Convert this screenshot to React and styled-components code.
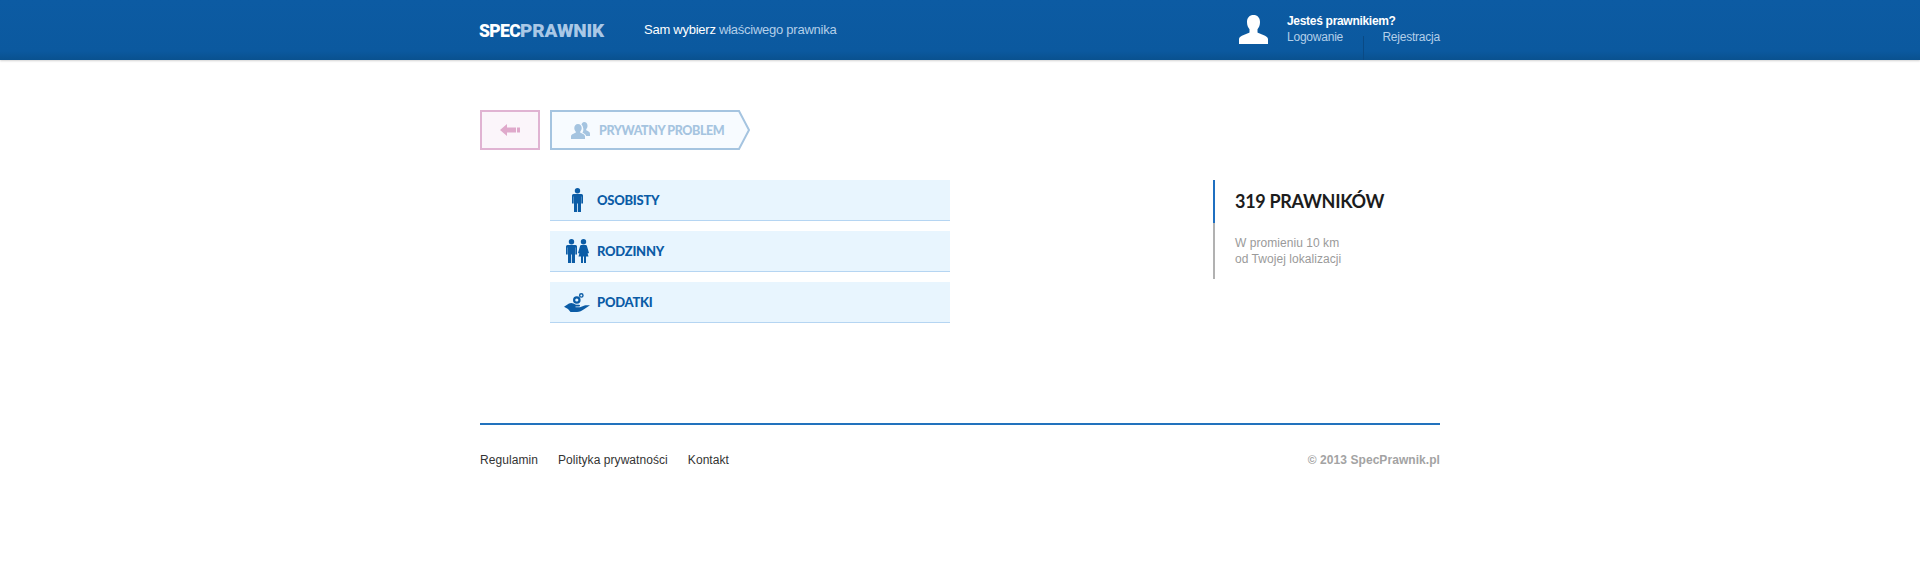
import React from "react";
import styled, { createGlobalStyle } from "styled-components";

const Global = createGlobalStyle`
  html, body { margin: 0; padding: 0; background: #fff; }
  body { font-family: "Liberation Sans", Arial, sans-serif; }
  * { box-sizing: border-box; }
`;
const Header = styled.header`
  height: 60px;
  background: linear-gradient(#0c5ba3, #0b599f 85%, #09518f);
  box-shadow: 0 1px 2px rgba(0,0,0,.18);
`;
const Wrap = styled.div`
  width: 960px;
  margin: 0 auto;
`;
const HeaderInner = styled(Wrap)`
  height: 60px;
  display: flex;
  align-items: center;
  position: relative;
`;
const Logo = styled.div`
  font-family: "Roboto", sans-serif;
  font-weight: 900;
  font-size: 17.5px;
  letter-spacing: -0.65px;
  width: 165px;
  margin-left: -1px;
  color: #fff;
  span { color: #a9c8e6; font-size: 19px; letter-spacing: -0.15px; }
`;
const Slogan = styled.div`
  font-size: 13px;
  color: #fff;
  letter-spacing: -0.25px;
  margin-top: -1px;
  span { color: #b3cfe9; }
`;
const Account = styled.div`
  margin-left: auto;
  display: flex;
  width: 201px;
  align-items: center;
  position: relative;
  height: 60px;
`;
const UserIcon = styled.svg`
  width: 29px;
  height: 29px;
  margin: 0 19px 0 0;
  flex: none;
  position: relative;
  top: -1px;
`;
const AccountText = styled.div`
  flex: 1;
  font-size: 12px;
  line-height: 16px;
  margin-top: -2px;
`;
const Question = styled.div`
  color: #fff;
  font-weight: 700;
  letter-spacing: -0.3px;
`;
const Links = styled.div`
  display: flex;
  justify-content: space-between;
  color: #b3cfe9;
  letter-spacing: -0.22px;
`;
const Divider = styled.i`
  position: absolute;
  left: 124px;
  top: 36px;
  height: 24px;
  width: 1px;
  background: #0a4a85;
`;
const Crumbs = styled.div`
  display: flex;
  gap: 10px;
  padding-top: 50px;
`;
const Back = styled.div`
  width: 60px;
  height: 40px;
  border: 2px solid #e0b3d2;
  background: #fbf5fa;
  display: flex;
  align-items: center;
  justify-content: center;
`;
const Tag = styled.div`
  position: relative;
  width: 201px;
  height: 40px;
  display: flex;
  align-items: center;
  padding-left: 21px;
  gap: 9px;
  color: #a5c4e0;
  font-family: "Lato", sans-serif;
  font-weight: 900;
  font-size: 12.5px;
  letter-spacing: -0.42px;
`;
const TagShape = styled.svg`
  position: absolute;
  left: 0;
  top: 0;
`;
const TagIcon = styled.svg`
  position: relative;
  flex: none;
`;
const TagLabel = styled.span`
  position: relative;
`;
const Main = styled.div`
  display: flex;
  padding: 30px 0 0 70px;
  height: 273px;
  justify-content: space-between;
`;
const List = styled.div`
  width: 400px;
  display: flex;
  flex-direction: column;
  gap: 10px;
`;
const Row = styled.div`
  height: 41px;
  background: #e8f5fe;
  border-bottom: 1px solid #b5d5f2;
  display: flex;
  align-items: center;
  color: #0b5ca6;
  font-family: "Lato", sans-serif;
  font-weight: 900;
  font-size: 13px;
  letter-spacing: -0.25px;
`;
const RowIcon = styled.div`
  width: 47px;
  padding-left: 7px;
  display: flex;
  justify-content: center;
  flex: none;
`;
const Side = styled.aside`
  width: 227px;
  height: 99px;
  border-left: 2px solid #b1b1b1;
  position: relative;
  padding-left: 20px;
`;
const SideMark = styled.i`
  position: absolute;
  left: -2px;
  top: 0;
  width: 2px;
  height: 43px;
  background: #1f6fc0;
`;
const Count = styled.div`
  font-family: "Lato", sans-serif;
  font-weight: 700;
  font-size: 18px;
  letter-spacing: -0.3px;
  line-height: 24px;
  color: #1c1c1c;
  padding-top: 9px;
`;
const Note = styled.div`
  font-size: 12px;
  line-height: 16px;
  letter-spacing: 0.05px;
  color: #9a9a9a;
  margin-top: 22px;
`;
const Footer = styled(Wrap)`
  border-top: 2px solid #2272bd;
  display: flex;
  justify-content: space-between;
  padding-top: 27px;
  font-size: 12px;
  line-height: 16px;
`;
const FootLinks = styled.nav`
  display: flex;
  gap: 20px;
  color: #333;
  letter-spacing: 0.06px;
`;
const Copy = styled.div`
  color: #a3a3a3;
  font-weight: 700;
  letter-spacing: 0.06px;
`;

const Person = ({ x = 0 }) => (
  <g transform={`translate(${x} 0)`} fill="#0b5ca6">
    <circle cx="5.500" cy="2.700" r="2.700" />
    <path d="M1.500 6h8A1.500 1.500 0 0 1 11 7.500V15.500H9.300V8.500H9V24H5.900V15.500H5.100V24H2V8.500h-.3V15.500H0V7.500A1.500 1.500 0 0 1 1.500 6z" />
  </g>
);
const Woman = ({ x = 0 }) => (
  <g transform={`translate(${x} 0)`} fill="#0b5ca6">
    <circle cx="5.500" cy="2.700" r="2.700" />
    <path d="M3.500 6h4c.8 0 1.300.5 1.500 1.200L11 14l-1.500.4-1.500-5 2.500 8.100H8V24H6v-6.500H5V24H3v-6.500H.5L3 9.400l-1.500 5L0 14l2-6.800C2.200 6.500 2.700 6 3.500 6z" />
  </g>
);

export default function App() {
  return (
    <>
      <Global />
      <Header>
        <HeaderInner>
          <Logo>SPEC<span>PRAWNIK</span></Logo>
          <Slogan>Sam wybierz <span>właściwego prawnika</span></Slogan>
          <Account>
            <UserIcon viewBox="0 0 29 29">
              <path fill="#fff" d="M14.500 0c4 0 6.500 2.700 6.500 7 0 3-1 5.600-2.500 7.300v3.200c1.500 1.400 10.500 3 10.500 6.500V29H0v-5c0-3.500 9-5.100 10.500-6.500v-3.200C9 12.600 8 10 8 7c0-4.300 2.500-7 6.500-7z" />
            </UserIcon>
            <AccountText>
              <Question>Jesteś prawnikiem?</Question>
              <Links><span>Logowanie</span><span>Rejestracja</span></Links>
            </AccountText>
            <Divider />
          </Account>
        </HeaderInner>
      </Header>
      <Wrap>
        <Crumbs>
          <Back>
            <svg width="20" height="12" viewBox="0 0 20 12">
              <path fill="#dfa9cb" d="M0 6l7-6v3.500h9v5H7V12zM17 3.500h3v5h-3z" />
            </svg>
          </Back>
          <Tag>
            <TagShape width="201" height="40" viewBox="0 0 201 40">
              <path d="M1 1h188l10 19-10 19H1z" fill="#f7fbff" stroke="#a5c4e0" strokeWidth="2" />
            </TagShape>
            <TagIcon width="19" height="17" viewBox="0 0 19 17">
              <path fill="#a5c4e0" d="M7 2c2.300 0 3.700 1.700 3.700 4 0 1.500-.6 2.800-1.400 3.500v1.300c1.500.8 4.700 1.500 4.700 3.700V17H0v-2.500c0-2.200 3.200-2.900 4.700-3.700V9.500C3.900 8.800 3.300 7.500 3.300 6 3.300 3.700 4.700 2 7 2z" />
              <path fill="#a5c4e0" d="M13 0c2.200 0 3.500 1.600 3.500 3.700 0 1.400-.5 2.600-1.300 3.300v1.300c1.300.7 3.800 1.300 3.800 3.400V14h-3.800c-.5-1.800-2.300-2.700-3.700-3.300.7-1.200 1.100-3 .7-4.800-.2-1.400-.8-2.600-1.700-3.500C11 .9 11.900 0 13 0z" />
            </TagIcon>
            <TagLabel>PRYWATNY PROBLEM</TagLabel>
          </Tag>
        </Crumbs>
        <Main>
          <List>
            <Row>
              <RowIcon>
                <svg width="11" height="24" viewBox="0 0 11 24"><Person /></svg>
              </RowIcon>
              OSOBISTY
            </Row>
            <Row>
              <RowIcon>
                <svg width="23" height="24" viewBox="0 0 23 24"><Person /><Woman x={12} /></svg>
              </RowIcon>
              RODZINNY
            </Row>
            <Row>
              <RowIcon>
                <svg width="26" height="19" viewBox="0 0 26 19">
                  <g fill="#0b5ca6">
                    <path fillRule="evenodd" d="M17.300 0a2.400 2.400 0 1 1 0 4.800 2.400 2.400 0 0 1 0-4.800zm0 1.400a1 1 0 1 0 0 2 1 1 0 0 0 0-2z" />
                    <path fillRule="evenodd" d="M12.800 3.200a3.800 3.800 0 1 1 0 7.600 3.800 3.800 0 0 1 0-7.600zm0 2.200a1.600 1.600 0 1 0 0 3.200 1.600 1.600 0 0 0 0-3.200z" />
                    <path d="M0 13.800L5 10.500c1.500-.8 3-.8 4.500 0l2.500 1.200h3c1.300 0 1.500 1.700 0 1.900h-3.500v.6h4.500l4.500-1.700c1.500-.5 3-.3 5.500-.2l-6 3.900C18 17.500 15.500 19 13 19H6.500L4 16z" />
                  </g>
                </svg>
              </RowIcon>
              PODATKI
            </Row>
          </List>
          <Side>
            <SideMark />
            <Count>319 PRAWNIKÓW</Count>
            <Note>W promieniu 10 km<br />od Twojej lokalizacji</Note>
          </Side>
        </Main>
        <Footer>
          <FootLinks>
            <span>Regulamin</span>
            <span>Polityka prywatności</span>
            <span>Kontakt</span>
          </FootLinks>
          <Copy>© 2013 SpecPrawnik.pl</Copy>
        </Footer>
      </Wrap>
    </>
  );
}
